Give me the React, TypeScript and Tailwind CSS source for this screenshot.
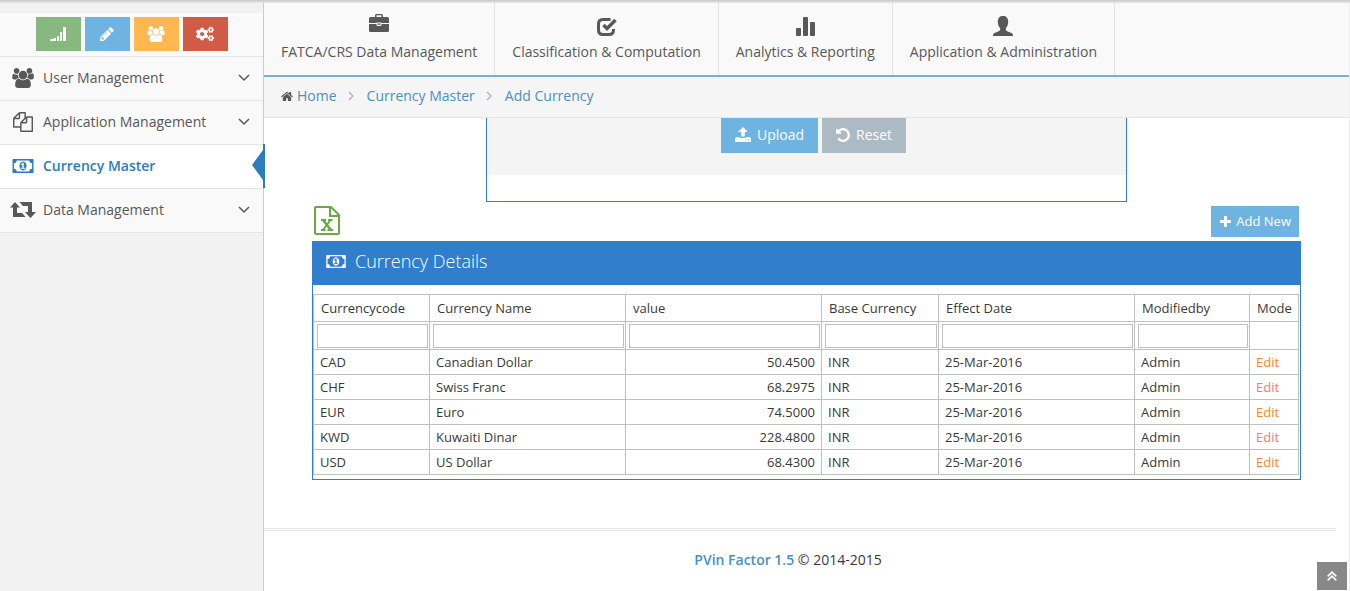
import type { ReactNode } from 'react';
import { FaCogs } from 'react-icons/fa';

/* ─── types ─── */

interface IconProps {
  className?: string;
}

interface MenuItem {
  label: string;
  icon: ReactNode;
  active?: boolean;
}

/* ─── data ─── */

const columns = [
  { label: 'Currencycode', width: 'w-[116px]' },
  { label: 'Currency Name', width: 'w-[196px]' },
  { label: 'value', width: 'w-[196px]' },
  { label: 'Base Currency', width: 'w-[117px]' },
  { label: 'Effect Date', width: 'w-[196px]' },
  { label: 'Modifiedby', width: 'w-[115px]' },
];

const currencies = [
  { code: 'CAD', name: 'Canadian Dollar', value: '50.4500', edit: 'text-[#fb8620]' },
  { code: 'CHF', name: 'Swiss Franc', value: '68.2975', edit: 'text-[#fb7a68]' },
  { code: 'EUR', name: 'Euro', value: '74.5000', edit: 'text-[#fb8620]' },
  { code: 'KWD', name: 'Kuwaiti Dinar', value: '228.4800', edit: 'text-[#fb7a68]' },
  { code: 'USD', name: 'US Dollar', value: '68.4300', edit: 'text-[#fb8620]' },
];

/* ─── icons ─── */

const UsersIcon = ({ className }: IconProps) => (
  <svg viewBox="0 0 1920 1792" fill="currentColor" className={className}>
    <path d="M593 896q-162 5-265 128h-134q-82 0-138-40.5t-56-118.5q0-353 124-353 6 0 43.5 21t97.5 42.5 119 21.5q67 0 133-23-5 37-5 66 0 159 93 298zm1071 637q0 120-73 189.5t-194 69.5h-874q-121 0-194-69.5t-73-189.5q0-53 3.5-103.5t14-109 26.5-108.5 43-97.5 62-81 85.5-53.5 111.5-20q10 0 43 21.5t73 48 107 48 135 21.5 135-21.5 107-48 73-48 43-21.5q61 0 111.5 20t85.5 53.5 62 81 43 97.5 26.5 108.5 14 109 3.5 103.5zm-1024-1277q0 106-75 181t-181 75-181-75-75-181 75-181 181-75 181 75 75 181zm704 384q0 159-112.5 271.5t-271.5 112.5-271.5-112.5-112.5-271.5 112.5-271.5 271.5-112.5 271.5 112.5 112.5 271.5zm576 225q0 78-56 118.5t-138 40.5h-134q-103-123-265-128 93-139 93-298 0-29-5-66 66 23 133 23 59 0 119-21.5t97.5-42.5 43.5-21q124 0 124 353zm-128-609q0 106-75 181t-181 75-181-75-75-181 75-181 181-75 181 75 75 181z" />
  </svg>
);

const FilesIcon = ({ className }: IconProps) => (
  <svg viewBox="0 0 1792 1792" fill="currentColor" className={className}>
    <path d="M1696 384q40 0 68 28t28 68v1216q0 40-28 68t-68 28h-960q-40 0-68-28t-28-68v-288h-544q-40 0-68-28t-28-68v-672q0-40 20-88t48-76l408-408q28-28 76-48t88-20h416q40 0 68 28t28 68v328q68-40 128-40h416zm-544 213l-299 299h299v-299zm-640-384l-299 299h299v-299zm196 647l316-316v-416h-384v416q0 40-28 68t-68 28h-416v640h512v-256q0-40 20-88t48-76zm956 804v-1152h-384v416q0 40-28 68t-68 28h-416v640h896z" />
  </svg>
);

const MoneyIcon = ({ className }: IconProps) => (
  <svg viewBox="0 256 1920 1280" fill="currentColor" className={className}>
    <path d="M768 1152h384v-96h-128v-448h-114l-148 137 77 80q42-37 55-57h2v288h-128v96zm512-256q0 70-21 142t-59.5 134-101.5 101-138 39-138-39-101.5-101-59.5-134-21-142 21-142 59.5-134 101.5-101 138-39 138 39 101.5 101 59.5 134 21 142zm512 256v-512q-106 0-181-75t-75-181h-1152q0 106-75 181t-181 75v512q106 0 181 75t75 181h1152q0-106 75-181t181-75zm128-832v1152q0 26-19 45t-45 19h-1792q-26 0-45-19t-19-45v-1152q0-26 19-45t45-19h1792q26 0 45 19t19 45z" />
  </svg>
);

const RetweetIcon = ({ className }: IconProps) => (
  <svg viewBox="0 0 26 16" fill="currentColor" className={className}>
    <path d="M5 0l5 5.500H7V11h5l3.500 4H3V5.500H0z" />
    <path d="M9.500 0H22v10h4l-5.500 6L15 10h3V4h-5z" />
  </svg>
);

const HomeIcon = ({ className }: IconProps) => (
  <svg viewBox="64 192 1664 1408" fill="currentColor" className={className}>
    <path d="M1472 992v480q0 26-19 45t-45 19h-384v-384h-256v384h-384q-26 0-45-19t-19-45v-480q0-1 .5-3t.5-3l575-474 575 474q1 2 1 6zm223-69l-62 74q-8 9-21 11h-3q-13 0-21-7l-692-577-692 577q-12 8-24 7-13-2-21-11l-62-74q-8-10-7-23.5t11-21.5l719-599q32-26 76-26t76 26l244 204v-195q0-14 9-23t23-9h192q14 0 23 9t9 23v408l219 182q10 8 11 21.5t-7 23.5z" />
  </svg>
);

const PencilIcon = ({ className }: IconProps) => (
  <svg viewBox="128 128 1536 1536" fill="currentColor" className={className}>
    <path d="M491 1536l91-91-235-235-91 91v107h128v128h107zm523-928q0-22-22-22-10 0-17 7l-542 542q-7 7-7 17 0 22 22 22 10 0 17-7l542-542q7-7 7-17zm-54-192l416 416-832 832h-416v-416zm683 96q0 53-37 90l-166 166-416-416 166-165q36-38 90-38 53 0 91 38l235 234q37 39 37 91z" />
  </svg>
);

const PlusIcon = ({ className }: IconProps) => (
  <svg viewBox="192 128 1408 1408" fill="currentColor" className={className}>
    <path d="M1600 736v192q0 40-28 68t-68 28h-416v416q0 40-28 68t-68 28h-192q-40 0-68-28t-28-68v-416h-416q-40 0-68-28t-28-68v-192q0-40 28-68t68-28h416v-416q0-40 28-68t68-28h192q40 0 68 28t28 68v416h416q40 0 68 28t28 68z" />
  </svg>
);

const UndoIcon = ({ className }: IconProps) => (
  <svg viewBox="128 128 1536 1536" fill="currentColor" className={className}>
    <path d="M1664 896q0 156-61 298t-164 245-245 164-298 61q-172 0-327-72.5t-264-204.5q-7-10-6.5-22.5t8.5-20.5l137-138q10-9 25-9 16 2 23 12 73 95 179 147t225 52q104 0 198.5-40.5t163.5-109.5 109.5-163.5 40.5-198.5-40.5-198.5-109.5-163.5-163.5-109.5-198.5-40.5q-98 0-188 35.5t-160 101.5l137 138q31 30 14 69-17 40-59 40h-448q-26 0-45-19t-19-45v-448q0-42 40-59 39-17 69 14l130 129q107-101 244.5-156.5t284.5-55.5q156 0 298 61t245 164 164 245 61 298z" />
  </svg>
);

const SignalIcon = ({ className }: IconProps) => (
  <svg viewBox="0 0 16 14" fill="currentColor" className={className}>
    <path d="M0 12h3v2H0zM3 11h3v3H3zM7 9h2v5H7zM10 5h2v9h-2zM13 0h3v14h-3z" />
  </svg>
);

const BriefcaseIcon = ({ className }: IconProps) => (
  <svg viewBox="0 0 20 18" fill="currentColor" className={className}>
    <path d="M6 3V1.500A1.500 1.500 0 0 1 7.500 0h5A1.500 1.500 0 0 1 14 1.500V3h4.500A1.500 1.500 0 0 1 20 4.500V9h-7.500v-.5h-5V9H0V4.500A1.500 1.500 0 0 1 1.500 3zm1.500 0h5V1.200h-5zM0 10h7.500v.5c0 1 .6 1.500 1.500 1.500h2c.9 0 1.500-.5 1.500-1.500V10H20v6.500a1.500 1.500 0 0 1-1.500 1.500h-17A1.500 1.500 0 0 1 0 16.500zM8.500 9.500h3v1.200h-3z" />
  </svg>
);

const CheckIcon = ({ className }: IconProps) => (
  <svg viewBox="0 0 20 18" fill="none" stroke="currentColor" className={className}>
    <path d="M13.500 1.500H6Q1.500 1.500 1.500 6v6Q1.500 16.500 6 16.500h6q4.500 0 4.500-4.500v-1" strokeWidth="3" />
    <path d="M6.500 7l3.500 3.500L18.500 2" strokeWidth="3.400" />
  </svg>
);

const StatsIcon = ({ className }: IconProps) => (
  <svg viewBox="0 0 19 19" fill="currentColor" className={className}>
    <rect x="0" y="11" width="5" height="8" rx="1" />
    <rect x="7" y="0" width="5" height="19" rx="1" />
    <rect x="14" y="5" width="5" height="14" rx="1" />
  </svg>
);

const UserIcon = ({ className }: IconProps) => (
  <svg viewBox="0 0 20 20" fill="currentColor" className={className}>
    <path d="M10 0c3.200 0 5.200 2 5.200 5.500 0 3-1 5.200-2.400 6.700v1.300c0 1 .8 1.400 2 1.900l3.700 1.500c1 .4 1.500 1.200 1.500 3.100H0c0-1.900.5-2.700 1.500-3.100l3.700-1.500c1.200-.5 2-.9 2-1.900v-1.300C5.800 10.700 4.800 8.500 4.800 5.500 4.800 2 6.800 0 10 0z" />
  </svg>
);

const UploadIcon = ({ className }: IconProps) => (
  <svg viewBox="0 0 16 15" fill="currentColor" className={className}>
    <path d="M8 0l5 5h-3.200v4.500H6.200V5H3z" />
    <path fillRule="evenodd" d="M1.500 10H5v1h6v-1h3.500L16 11v3q0 1-1 1H1q-1 0-1-1v-3zM10.500 12.500v1h1v-1zm2.500 0v1h1v-1z" />
  </svg>
);

const ExcelIcon = ({ className }: IconProps) => (
  <svg viewBox="0 0 26 29" fill="none" stroke="currentColor" className={className}>
    <path d="M1 2q0-1 1-1h15l8 8v18q0 1-1 1H2q-1 0-1-1z" strokeWidth="2" />
    <path d="M16 1v9h9" strokeWidth="2" />
    <path d="M9 14l8 10" strokeWidth="2.600" />
    <path d="M16.500 14L9 24" strokeWidth="1.800" />
    <path d="M7 14h5M14 14h4.500M7 24h4.500M13.500 24H19" strokeWidth="1.800" />
  </svg>
);

const ChevronDown = ({ className }: IconProps) => (
  <svg viewBox="0 0 12 8" fill="none" stroke="currentColor" strokeWidth="1.500" className={className}>
    <path d="M1 1l5 5 5-5" />
  </svg>
);

const ChevronRight = ({ className }: IconProps) => (
  <svg viewBox="0 0 6 10" fill="none" stroke="currentColor" strokeWidth="1.500" className={className}>
    <path d="M1 1l4 4-4 4" />
  </svg>
);

const DoubleUpIcon = ({ className }: IconProps) => (
  <svg viewBox="0 0 10 10" fill="none" stroke="currentColor" strokeWidth="1.700" className={className}>
    <path d="M.700 5.300L5 1.200l4.300 4.100M.700 9.300L5 5.200l4.300 4.100" />
  </svg>
);

/* ─── menus ─── */

const shortcuts = [
  { label: 'Statistics', color: 'bg-[#87b87f]', icon: <SignalIcon className="w-4 h-3.5" /> },
  { label: 'Edit profile', color: 'bg-[#6fb3e0]', icon: <PencilIcon className="w-3.5 h-3.5" /> },
  { label: 'Groups', color: 'bg-[#ffb752]', icon: <UsersIcon className="w-[18px] h-4" /> },
  { label: 'Settings', color: 'bg-[#d15b47]', icon: <FaCogs size={18} /> },
];

const sideMenu: MenuItem[] = [
  { label: 'User Management', icon: <UsersIcon className="w-[22px] h-5" /> },
  { label: 'Application Management', icon: <FilesIcon className="w-5 h-5" /> },
  { label: 'Currency Master', icon: <MoneyIcon className="w-[22px] h-[14px]" />, active: true },
  { label: 'Data Management', icon: <RetweetIcon className="w-[26px] h-4" /> },
];

const topMenu: MenuItem[] = [
  { label: 'FATCA/CRS Data Management', icon: <BriefcaseIcon className="w-5 h-[18px] mb-1" /> },
  { label: 'Classification & Computation', icon: <CheckIcon className="w-5 h-[18px]" /> },
  { label: 'Analytics & Reporting', icon: <StatsIcon className="w-[19px] h-[19px]" /> },
  { label: 'Application & Administration', icon: <UserIcon className="w-5 h-5" /> },
];

/* ─── sections ─── */

function Sidebar() {
  return (
    <aside className="w-[264px] shrink-0 border-r border-[#ccc] bg-[#f2f2f2] pt-[13px]">
      <div className="flex justify-center gap-1 bg-[#fafafa] pt-1 pb-[5px]">
        {shortcuts.map((s) => (
          <button
            key={s.label}
            aria-label={s.label}
            className={`flex h-[34px] w-[45px] items-center justify-center text-white ${s.color}`}
          >
            {s.icon}
          </button>
        ))}
      </div>
      <nav className="border-b border-[#e5e5e5]">
        {sideMenu.map((item) => (
          <a
            key={item.label}
            href="#"
            className={`relative flex h-11 items-center border-t border-[#e5e5e5] pr-[13px] pb-0.5 ${
              item.active ? 'bg-white font-semibold text-[#2b7dbc]' : 'bg-[#f9f9f9] text-[#585858]'
            }`}
          >
            <span className="flex w-[43px] justify-center pl-1 pr-px">{item.icon}</span>
            <span className="flex-1">{item.label}</span>
            {!item.active && <ChevronDown className="w-3 h-2" />}
            {item.active && (
              <svg
                viewBox="0 0 13 44"
                fill="currentColor"
                className="absolute -right-0.5 -top-px h-11 w-[13px]"
              >
                <path d="M0 21L11 6V0h2v44h-2v-8z" />
              </svg>
            )}
          </a>
        ))}
      </nav>
    </aside>
  );
}

function TopNav() {
  return (
    <nav className="flex h-[77px] border-b-2 border-[#79b0ce] bg-[#f9f9f9]">
      {topMenu.map((item) => (
        <a
          key={item.label}
          href="#"
          className="flex flex-col items-center justify-end border-r border-[#e2e2e2] px-[17px] pb-[13px] text-[#585858]"
        >
          {item.icon}
          <span className="mt-1.5 leading-5">{item.label}</span>
        </a>
      ))}
    </nav>
  );
}

function Breadcrumbs() {
  return (
    <div className="flex h-[41px] items-center border-b border-[#e5e5e5] bg-[#f5f5f5] pl-[17px] pb-0.5 text-[#4c8fbd]">
      <HomeIcon className="mr-1 w-3 h-[11px] text-[#585858]" />
      <a href="#">Home</a>
      <ChevronRight className="ml-[11px] mr-[13px] w-1.5 h-2.5 text-[#b2b6bf]" />
      <a href="#">Currency Master</a>
      <ChevronRight className="ml-[11px] mr-[13px] w-1.5 h-2.5 text-[#b2b6bf]" />
      <a href="#">Add Currency</a>
    </div>
  );
}

function UploadBox() {
  return (
    <div className="mx-auto max-w-[641px] border border-t-0 border-[#307ecc] pb-[26px]">
      <div className="flex justify-center gap-1 bg-[#f4f4f4] pb-[22px] pl-3.5">
        <button className="flex h-[35px] items-center gap-1.5 bg-[#6fb3e0] px-3.5 pb-0.5 text-white">
          <UploadIcon className="w-4 h-[15px]" />
          Upload
        </button>
        <button className="flex h-[35px] items-center gap-1.5 bg-[#abbac3] px-3.5 pb-0.5 text-white">
          <UndoIcon className="w-3.5 h-3.5" />
          Reset
        </button>
      </div>
    </div>
  );
}

function CurrencyTable() {
  return (
    <section className="border border-t-0 border-[#307ecc] pb-1">
      <h2 className="flex h-11 items-center gap-[9px] bg-[#307ecc] pb-1 pl-[13px] text-lg font-light text-white">
        <MoneyIcon className="w-5 h-[13px]" />
        Currency Details
      </h2>
      <div className="pt-[9px] pr-px">
        <table className="w-full table-fixed border-collapse text-[13px] leading-[18px] text-[#393939]">
          <thead>
            <tr className="h-[27px]">
              {columns.map((c) => (
                <th
                  key={c.label}
                  className={`border border-[#c0c0c0] px-[7px] text-left font-normal ${c.width}`}
                >
                  {c.label}
                </th>
              ))}
              <th className="w-[49px] border border-[#c0c0c0] pl-[7px] text-left font-normal">Mode</th>
            </tr>
            <tr className="h-7">
              {columns.map((c) => (
                <td key={c.label} className="border border-[#c0c0c0] pl-[3px] pr-px">
                  <input
                    type="text"
                    aria-label={c.label}
                    className="block h-6 w-full border border-[#c0c0c0] bg-white px-1 outline-none"
                  />
                </td>
              ))}
              <td className="border border-[#c0c0c0]" />
            </tr>
          </thead>
          <tbody>
            {currencies.map((c) => (
              <tr key={c.code} className="h-[25px]">
                <td className="border border-[#c0c0c0] px-1.5">{c.code}</td>
                <td className="border border-[#c0c0c0] px-1.5">{c.name}</td>
                <td className="border border-[#c0c0c0] px-1.5 text-right">{c.value}</td>
                <td className="border border-[#c0c0c0] px-1.5">INR</td>
                <td className="border border-[#c0c0c0] px-1.5">25-Mar-2016</td>
                <td className="border border-[#c0c0c0] px-1.5">Admin</td>
                <td className="border border-[#c0c0c0] px-1.5">
                  <a href="#" className={c.edit}>Edit</a>
                </td>
              </tr>
            ))}
          </tbody>
        </table>
      </div>
    </section>
  );
}

/* ─── page ─── */

export default function App() {
  return (
    <div className="relative flex min-h-screen bg-white font-['Open_Sans',sans-serif] text-sm text-[#393939]">
      {/* Shadow of the title bar */}
      <div className="absolute inset-x-0 top-0 z-10 h-[3px] bg-linear-to-b from-[#c8c8c8] to-[#eaeaea]" />

      <Sidebar />

      <main className="min-w-0 flex-1 border-r border-[#eee]">
        <TopNav />
        <Breadcrumbs />

        <div className="px-12">
          <UploadBox />
          <div className="flex h-[39px] items-start justify-between px-0.5 py-1">
            <button aria-label="Export to Excel" className="text-[#69aa46]">
              <ExcelIcon className="w-[26px] h-[29px]" />
            </button>
            <button className="flex h-[31px] items-center gap-[5px] bg-[#6fb3e0] pl-[9px] pr-2 text-[13px] text-white">
              <PlusIcon className="w-[11px] h-[11px]" />
              Add New
            </button>
          </div>
          <CurrencyTable />
        </div>

        <footer className="mr-[13px] mt-12 border-t-[3px] border-double border-[#e5e5e5] pt-[19px] pr-6 text-center leading-5">
          <span className="font-semibold text-[#478fca]">PVin Factor 1.5</span> © 2014-2015
        </footer>
      </main>

      <button
        aria-label="Scroll to top"
        className="fixed bottom-px right-[3px] flex h-7 w-[30px] items-center justify-center bg-[#888] text-white"
      >
        <DoubleUpIcon className="w-2.5 h-2.5" />
      </button>
    </div>
  );
}
